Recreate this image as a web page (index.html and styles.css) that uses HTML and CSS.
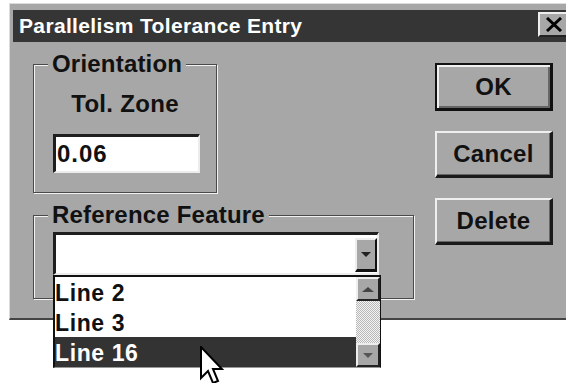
FILE: index.html
```html
<!DOCTYPE html>
<html>
<head>
    <title>Parallelism Tolerance Entry</title>
    <link rel="stylesheet" href="styles.css">
</head>
<body>
    <div class="dialog">
        <div class="titlebar">
            <span class="title">Parallelism Tolerance Entry</span>
            <div class="close-btn">
                <svg width="18" height="15" viewBox="0 0 18 15">
                    <path d="M2 1 L16 14 M16 1 L2 14" stroke="#000" stroke-width="3" fill="none"/>
                </svg>
            </div>
        </div>
        <div class="content">
            <div class="left-col">
                <div class="group orientation">
                    <div class="group-title">Orientation</div>
                    <div class="tol-label">Tol. Zone</div>
                    <div class="textbox">0.06</div>
                </div>
                <div class="group reference">
                    <div class="group-title">Reference Feature</div>
                    <div class="combo">
                        <div class="combo-field">
                            <div class="combo-btn"><span class="arrow-down"></span></div>
                        </div>
                        <div class="dropdown">
                            <div class="items">
                                <div class="item">Line 2</div>
                                <div class="item">Line 3</div>
                                <div class="item selected">Line 16</div>
                            </div>
                            <div class="scrollbar">
                                <div class="scroll-btn"><span class="arrow-up"></span></div>
                                <div class="track"></div>
                                <div class="scroll-btn"><span class="arrow-down small"></span></div>
                            </div>
                        </div>
                    </div>
                </div>
            </div>
            <div class="buttons">
                <div class="btn default">OK</div>
                <div class="btn">Cancel</div>
                <div class="btn">Delete</div>
            </div>
        </div>
    </div>

    <svg class="cursor" width="24" height="40" viewBox="0 0 12 20">
        <polygon points="0.5,0.5 0.5,16 4,12.5 6.5,18.5 9,17.5 6.5,11.5 11,11.5" fill="#fff" stroke="#000" stroke-width="1"/>
    </svg>
</body>
</html>
```

FILE: styles.css
```css
html {
    height: 100%;
    overflow: hidden;
}

body {
    position: relative;
    height: 100%;
    margin: 0;
    background-color: #fff;
    font-family: "Liberation Sans", Arial, sans-serif;
    font-weight: bold;
    color: #111;
}

.dialog {
    width: 570px;
    height: 317px;
    margin: 3px 0 0 9px;
    box-sizing: border-box;
    padding: 6px 3px 0 3px;
    background-color: #a7a7a7;
    border-top: 1px solid #dcdcdc;
    border-left: 1px solid #dcdcdc;
    border-bottom: 2px solid #444;
}

.titlebar {
    display: flex;
    justify-content: space-between;
    align-items: flex-start;
    height: 32px;
    background-color: #353535;
    color: #fff;
}

.title {
    padding-left: 6px;
    line-height: 32px;
    font-size: 21px;
    letter-spacing: 0.35px;
}

.close-btn {
    display: flex;
    align-items: center;
    justify-content: center;
    width: 32px;
    height: 25px;
    margin: 2px 6px 0 0;
    box-sizing: border-box;
    background-color: #a7a7a7;
    border-top: 2px solid #eee;
    border-left: 2px solid #eee;
    border-right: 2px solid #222;
    border-bottom: 2px solid #222;
}

.content {
    display: flex;
    padding: 21px 0 0 20px;
}

.left-col {
    width: 381px;
    padding-top: 1px;
}

/* etched group boxes */
.group {
    box-sizing: border-box;
    border: 1px solid #4a4a4a;
    box-shadow: 1px 1px 0 #f2f2f2, inset 1px 1px 0 #f2f2f2;
}

.group-title {
    width: fit-content;
    margin: -13px 0 0 14px;
    padding: 0 4px;
    font-size: 24px;
    line-height: 24px;
    letter-spacing: 0.2px;
    background-color: #a7a7a7;
}

.orientation {
    width: 184px;
    padding-bottom: 19px;
}

.reference {
    width: 381px;
    margin-top: 22px;
    padding-bottom: 23px;
}

.tol-label {
    margin-top: 16px;
    text-align: center;
    font-size: 24px;
    line-height: 24px;
    letter-spacing: 0.3px;
}

.textbox {
    width: 147px;
    height: 39px;
    margin: 18px 0 0 19px;
    box-sizing: border-box;
    padding-left: 1px;
    background-color: #fff;
    border-style: solid;
    border-width: 3px 2px 2px 3px;
    border-color: #1e1e1e #ececec #ececec #1e1e1e;
    font-size: 24px;
    line-height: 34px;
    letter-spacing: 1px;
}

.combo {
    position: relative;
    width: 326px;
    margin: 5px 0 0 19px;
}

.combo-field {
    display: flex;
    justify-content: flex-end;
    height: 43px;
    box-sizing: border-box;
    padding: 3px 0 1px 0;
    background-color: #fff;
    border-style: solid;
    border-width: 3px 2px 2px 3px;
    border-color: #1e1e1e #ececec #ececec #1e1e1e;
}

.combo-btn {
    display: flex;
    align-items: center;
    justify-content: center;
    width: 22px;
    box-sizing: border-box;
    background-color: #a7a7a7;
    border-top: 2px solid #eee;
    border-left: 2px solid #eee;
    border-right: 2px solid #111;
    border-bottom: 3px solid #111;
}

.arrow-down {
    width: 0;
    height: 0;
    border-left: 5px solid transparent;
    border-right: 5px solid transparent;
    border-top: 5px solid #222;
}

.arrow-down.small {
    border-top-color: #555;
}

.arrow-up {
    width: 0;
    height: 0;
    border-left: 6px solid transparent;
    border-right: 6px solid transparent;
    border-bottom: 5px solid #444;
}

/* open dropdown list */
.dropdown {
    position: absolute;
    top: 100%;
    left: 0;
    z-index: 2;
    display: flex;
    width: 328px;
    height: 93px;
    box-sizing: border-box;
    background-color: #fff;
    border-top: 2px solid #111;
    border-left: 2px solid #111;
    border-right: 1px solid #111;
    border-bottom: 1px solid #999;
}

.items {
    flex: 1;
}

.item {
    height: 30px;
    font-size: 23px;
    line-height: 32px;
    letter-spacing: 0.6px;
}

.item.selected {
    background-color: #333;
    color: #fff;
}

.scrollbar {
    display: flex;
    flex-direction: column;
    width: 24px;
}

.scroll-btn {
    display: flex;
    align-items: center;
    justify-content: center;
    height: 24px;
    box-sizing: border-box;
    background-color: #a7a7a7;
    border-top: 2px solid #eee;
    border-left: 2px solid #eee;
    border-right: 2px solid #222;
    border-bottom: 2px solid #222;
}

.track {
    flex: 1;
    background: repeating-conic-gradient(#b8b8b8 0 25%, #f4f4f4 0 50%) 0 0 / 2px 2px;
}

.buttons {
    display: flex;
    flex-direction: column;
    gap: 20px;
    width: 118px;
    margin-left: 21px;
}

.btn {
    display: flex;
    align-items: center;
    justify-content: center;
    height: 47px;
    box-sizing: border-box;
    background-color: #a7a7a7;
    border-top: 2px solid #efefef;
    border-left: 2px solid #efefef;
    border-right: 3px solid #1a1a1a;
    border-bottom: 3px solid #1a1a1a;
    box-shadow: inset -1px -1px 0 #666;
    font-size: 24px;
    letter-spacing: 0.3px;
}

.btn.default {
    height: 48px;
    border: 2px solid #111;
    border-right-width: 3px;
    border-bottom-width: 3px;
    box-shadow: inset 2px 2px 0 #efefef, inset -2px -2px 0 #666;
}

.cursor {
    position: absolute;
    left: 200px;
    top: 346px;
    z-index: 5;
}
```
